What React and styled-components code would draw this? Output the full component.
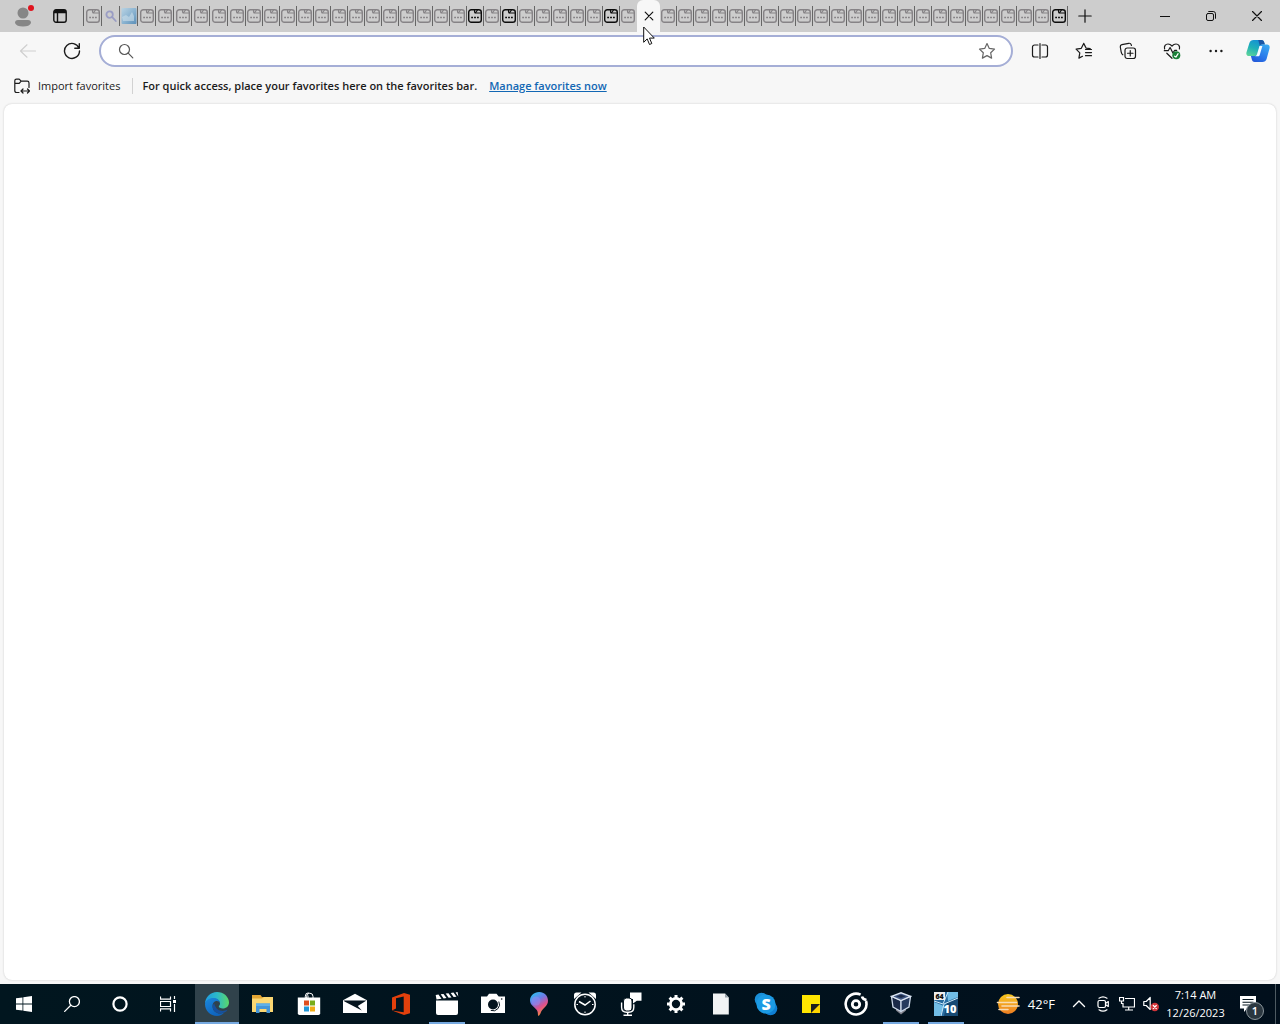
import React, { useState } from 'react';
import styled, { createGlobalStyle } from 'styled-components';

const GlobalStyle = createGlobalStyle`
  * {
    box-sizing: border-box;
  }
  body {
    margin: 0;
    font-family: 'Open Sans', 'Noto Sans', sans-serif;
    font-size: 11px;
    line-height: 16px;
    color: #1b1b1b;
  }
  button {
    border: 0;
    padding: 0;
    background: none;
    color: inherit;
    font: inherit;
  }
  svg {
    display: block;
    flex: none;
  }
`;

const Line = ({ size = 16, children, ...rest }) => (
  <svg
    width={size}
    height={size}
    viewBox={`0 0 ${size} ${size}`}
    fill="none"
    stroke="currentColor"
    strokeWidth="1.2"
    strokeLinecap="round"
    strokeLinejoin="round"
    aria-hidden="true"
    {...rest}
  >
    {children}
  </svg>
);

const Art = ({ size = 24, children }) => (
  <svg width={size} height={size} viewBox={`0 0 ${size} ${size}`} aria-hidden="true">
    {children}
  </svg>
);

/* ---------- tab strip ---------- */

const PageIcon = () => (
  <Line size={14} strokeWidth="1.4">
    <rect x="0.7" y="0.7" width="12.6" height="12.6" rx="2.6" />
    <path d="M6.5 0.9v1.8q0 1.3 1.3 1.3h5.300M7 4.200l2.300-2.800" strokeWidth="1.1" />
    <path d="M3.200 8.500h1.800M6.100 8.500h1.800M9 8.500h1.800" strokeWidth="1.7" strokeLinecap="butt" />
  </Line>
);

const SearchTabIcon = () => (
  <Line size={14} strokeWidth="1.8" stroke="#9a9dc4">
    <circle cx="5.6" cy="5.6" r="3.2" />
    <path d="M8.2 8.2l3.6 3.8" />
  </Line>
);

const PictureTabIcon = () => (
  <Art size={16}>
    <defs>
      <linearGradient id="sky" x1="0" y1="0" x2="1" y2="1">
        <stop offset="0" stopColor="#b9d3e3" />
        <stop offset="0.5" stopColor="#8db5d2" />
        <stop offset="1" stopColor="#5b8fb8" />
      </linearGradient>
    </defs>
    <rect x="0.5" width="15" height="16" rx="1" fill="url(#sky)" />
    <path d="M1 9l4-2 3 2 3-5 2 4v5H2z" fill="#c8dce8" opacity="0.65" />
  </Art>
);

const tabs = Array.from({ length: 57 }, (_, i) => ({
  id: i,
  kind: i === 1 ? 'search' : i === 2 ? 'picture' : 'page',
  awake: [22, 24, 30, 56].includes(i),
  wide: i < 9,
}));

const ACTIVE_TAB = 32;

/* ---------- toolbar icons ---------- */

const CopilotIcon = () => (
  <Art size={24}>
    <defs>
      <linearGradient id="cpA" x1="0.6" y1="0" x2="0.2" y2="1">
        <stop offset="0" stopColor="#1591d4" />
        <stop offset="0.5" stopColor="#1fb0b8" />
        <stop offset="1" stopColor="#5cd39a" />
      </linearGradient>
      <linearGradient id="cpB" x1="0.8" y1="0" x2="0.2" y2="1">
        <stop offset="0" stopColor="#38a8f2" />
        <stop offset="0.6" stopColor="#2a78ea" />
        <stop offset="1" stopColor="#2358d8" />
      </linearGradient>
    </defs>
    <path d="M7.5 1h7.8c1.5 0 2.3.8 2.7 2l.8 2.6h-2.4c-1.4 0-2.2.8-2.6 2L11.4 15c-.5 1.5-1.4 2-2.8 2H3C.8 17-.1 15.3.5 13.2L3.4 4C4 2.1 5.500 1 7.500 1z" fill="url(#cpA)" />
    <path d="M12.200 1h3.200c1.500 0 2.300.8 2.700 2l.8 2.600h-2.500c-1.200 0-2 .6-2.400 1.600z" fill="#1b56a5" />
    <path d="M16.500 23H8.700c-1.500 0-2.300-.8-2.700-2l-1.100-4h3.500c1.700 0 2.500-.8 2.900-2l2.200-7.400c.4-1.300 1.300-2 2.700-2H21c2.200 0 3.100 1.700 2.500 3.800L20.600 20c-.6 1.900-2.100 3-4.100 3z" fill="url(#cpB)" />
    <path d="M13.500 7h2.900l-2.600 8.700c-.3 1-.9 1.600-1.800 1.600H9c1.100-.2 1.800-1.200 2.100-2.200z" fill="#f4fbff" />
  </Art>
);

const toolbarButtons = [
  {
    label: 'Split screen',
    icon: (
      <Line size={18}>
        <path d="M7 3H3.500a2 2 0 0 0-2 2v8a2 2 0 0 0 2 2H7M11 3h3.500a2 2 0 0 1 2 2v8a2 2 0 0 1-2 2H11M9 1.500v15" />
      </Line>
    ),
  },
  {
    label: 'Favorites',
    icon: (
      <Line size={18}>
        <path d="M15.200 6.700l-4-.5L8.700 1.400 6.300 6.300l-5.200.8 3.700 3.700-.9 5.300 3.600-1.800M10.500 7.500h6M10.500 10.600h6M10.500 13.700h6" />
      </Line>
    ),
  },
  {
    label: 'Collections',
    icon: (
      <Line size={18}>
        <rect x="6" y="6" width="10.5" height="10.5" rx="2.2" />
        <path d="M11.250 8.500v5.500M8.500 11.250h5.500M3.800 12.800C2.500 12 2.400 11 2.100 9.500L1.300 5c-.2-1.300.4-2 1.600-2.300L9.700 1.300c1.300-.2 2.200.2 2.600 1.600l.1.600" />
      </Line>
    ),
  },
  {
    label: 'Browser essentials',
    icon: (
      <Line size={18}>
        <path d="M1.600 7C.9 4.200 2.500 2 5 2c1.700 0 3 .9 4 2 1-1.100 2.300-2 4-2 2.500 0 4.100 2.200 3.400 5M1.300 8.700h3.900l1.900-3.200 2.800 5.600 1.800-2.800h2M3.800 11.200L9 16.300" />
        <circle cx="13.300" cy="13.300" r="4" fill="#1a7f37" stroke="none" />
        <path d="M11.600 14.200l1.300.9 2.200-3.400" stroke="#fff" />
      </Line>
    ),
  },
  {
    label: 'Settings and more',
    icon: (
      <Line size={18} stroke="none">
        <g fill="currentColor">
          <circle cx="3.6" cy="9" r="1.2" />
          <circle cx="9" cy="9" r="1.2" />
          <circle cx="14.4" cy="9" r="1.2" />
        </g>
      </Line>
    ),
  },
];

/* ---------- taskbar icons ---------- */

const systemButtons = [
  {
    label: 'Start',
    icon: (
      <Art size={16}>
        <path d="M0 2.300l6.500-.9v6.200H0zM7.300 1.300L16 0v7.600H7.300zM0 8.400h6.500v6.200L0 13.700zM7.300 8.400H16V16l-8.700-1.200z" fill="#fff" />
      </Art>
    ),
  },
  {
    label: 'Search',
    icon: (
      <Line size={16} strokeWidth="1.3">
        <circle cx="10.4" cy="5.6" r="5" />
        <path d="M6.800 9.300L.7 15.400" />
      </Line>
    ),
  },
  {
    label: 'Cortana',
    icon: (
      <Line size={16} strokeWidth="2.2">
        <circle cx="8" cy="8" r="6.6" />
      </Line>
    ),
  },
  {
    label: 'Task View',
    icon: (
      <Line size={16} strokeLinecap="butt" strokeLinejoin="miter">
        <path d="M.5.500v2.700h10V.5M.5 15.500v-2.700h10v2.700M.5 5.500h10v5H.5zM14.500 0v3M14.500 8v8" />
        <rect x="13" y="4" width="3" height="3" fill="currentColor" stroke="none" />
      </Line>
    ),
  },
];

const EdgeIcon = () => (
  <Art size={24}>
    <defs>
      <linearGradient id="edgeTop" x1="0" y1="0.5" x2="1" y2="0.5">
        <stop offset="0" stopColor="#1f9be0" />
        <stop offset="0.5" stopColor="#2cb9c9" />
        <stop offset="1" stopColor="#5bd868" />
      </linearGradient>
      <linearGradient id="edgeLow" x1="0" y1="0" x2="0.6" y2="1">
        <stop offset="0" stopColor="#1b88dc" />
        <stop offset="1" stopColor="#0e62bc" />
      </linearGradient>
    </defs>
    <path d="M0 12C0 5 5.400 0 12 0s12 4.800 12 10.400c0 3.800-2.800 6-6.200 6-2.400 0-4-.9-4-1.900 0-.7 1.200-1.200 1.200-3 0-2.700-2.600-4.700-5.800-4.700C4.600 6.800.8 9.500 0 12z" fill="url(#edgeTop)" />
    <path d="M0 12C.6 8.500 4 6 8.300 6c3.700 0 6.500 2 6.700 5-.5-1.300-1.800-2-3.200-2-2.500 0-4.300 2.200-4.300 5.200 0 4.300 3.500 7.300 7.700 7.300 1.500 0 2.800-.4 4-.9C17.400 22.800 15 24 12 24 5.300 24 0 18.700 0 12z" fill="url(#edgeLow)" />
    <path d="M9.200 11.200c-1.800 1.700-2 4.600-.6 6.900 1.700 3 5.400 4.300 10.600 2.500 1.400-.5 2.700-1.700 3.400-2.800-5 2.200-11.500 1.500-13.400-6.600z" fill="#17509c" />
  </Art>
);

const apps = [
  { label: 'Microsoft Edge', focused: true, icon: <EdgeIcon /> },
  {
    label: 'File Explorer',
    icon: (
      <Art>
        <path d="M1 3h8.500l1.500 2h11v15H1z" fill="#e2a534" />
        <path d="M1 6.500h10L13 5h9v15H1z" fill="#fbd772" />
        <path d="M5 11.500h14V21h-3.500v-4h-7v4H5z" fill="#4596d8" />
        <path d="M5 11.500h14v2.500H5z" fill="#5fb0e8" />
      </Art>
    ),
  },
  {
    label: 'Microsoft Store',
    icon: (
      <Art>
        <path d="M8.300 6V4.200a3.400 3.400 0 0 1 3.400-3.400M9.600 6V4.400a3.200 3.200 0 0 1 6.400 0V6M11 6V3.500" fill="none" stroke="#fff" strokeWidth="1" />
        <path d="M.8 5.500h22.400v15.800q0 1.700-1.700 1.700H2.500Q.8 23 .8 21.300z" fill="#fff" />
        <path d="M7 8.500h5v5H7z" fill="#e04f1f" />
        <path d="M13 8.500h5v5h-5z" fill="#78ac19" />
        <path d="M7 14.500h5v5H7z" fill="#2298d8" />
        <path d="M13 14.500h5v5h-5z" fill="#f0ac17" />
      </Art>
    ),
  },
  {
    label: 'Mail',
    icon: (
      <Art>
        <path d="M12 1.800l12 6.400V21H0V8.200z" fill="#fff" />
        <path d="M.5 8.500h23L14.800 14l4 4.500-17.300-9z" fill="#05141e" />
      </Art>
    ),
  },
  {
    label: 'Office',
    icon: (
      <Art>
        <path d="M3 5.500L15 1l6 1.700v18.500L15 23 3 18.600l11.700 1.600V4.500L7 6.300v10.300l-4 1.900z" fill="#e2400c" />
      </Art>
    ),
  },
  {
    label: 'Movies & TV',
    running: true,
    icon: (
      <Art>
        <path d="M1 8.500h22V21q0 2-2 2H3q-2 0-2-2z" fill="#fff" />
        <path d="M.7 3l2.800-.4 3 4.200-5 .7zM5.700 2.300l2.800-.4 3 4.200-2.900.4zM10.700 1.600l2.800-.4 3 4.200-2.900.4zM15.700.9l2.800-.4 3 4.200-2.900.4zM20.600.4l2-.3.700 4.400z" fill="#fff" />
      </Art>
    ),
  },
  {
    label: 'Camera',
    icon: (
      <Art>
        <path d="M0 4.500h6L8 1.800h7.500l2.200 2.700H24V21H0z" fill="#fff" />
        <circle cx="12" cy="12.5" r="5" fill="#05141e" />
        <path d="M17.800 9.500a6.400 6.400 0 0 1-8 8.900" fill="none" stroke="#05141e" strokeWidth="1" />
        <circle cx="20.7" cy="7" r="0.8" fill="#05141e" />
      </Art>
    ),
  },
  {
    label: 'Paint 3D',
    icon: (
      <Art>
        <defs>
          <linearGradient id="drop" x1="0.2" y1="0" x2="0.7" y2="1">
            <stop offset="0" stopColor="#2bc0f0" />
            <stop offset="0.35" stopColor="#6c7be8" />
            <stop offset="0.65" stopColor="#e0508c" />
            <stop offset="1" stopColor="#f79a2d" />
          </linearGradient>
        </defs>
        <path d="M12.200 0C17.400 0 21 3.800 21 8.700c0 5.600-5.500 7.600-7 11.300-.5 1.400-1.300 3.500-2.500 4-.9-.8-.4-3-1-4.600C9.300 16 3 13.800 3 8.600 3 3.800 7 0 12.200 0z" fill="url(#drop)" />
        <circle cx="9" cy="9" r="4.5" fill="#a08cf0" opacity="0.45" />
      </Art>
    ),
  },
  {
    label: 'Alarms & Clock',
    icon: (
      <Art>
        <path d="M1 7V3q0-2.500 2.500-2.500h5zM23 7V3q0-2.500-2.500-2.500h-5z" fill="#fff" />
        <circle cx="12" cy="12.5" r="10.2" fill="#05141e" stroke="#fff" strokeWidth="1.5" />
        <path d="M6 9.500l6 3.500 5.500-4" fill="none" stroke="#fff" strokeWidth="1.5" />
        <path d="M12 4v1.500M12 19.500V21M3.500 12.500H5M19 12.500h1.500" stroke="#fff" strokeWidth="1" />
      </Art>
    ),
  },
  {
    label: 'Voice Recorder',
    compact: true,
    icon: (
      <Art>
        <path d="M11 .5h11.500v8.300h-4.700L14 11.500V7h-3z" fill="#fff" />
        <rect x="4.5" y="6" width="8.5" height="13" rx="3" fill="#fff" stroke="#05141e" />
        <path d="M2.600 10.500v4.800q0 5 5 5h2.200q5 0 5-5v-3M8.700 20.500v3M4.500 23.300h8.500" fill="none" stroke="#fff" strokeWidth="1.4" />
      </Art>
    ),
  },
  {
    label: 'Settings',
    compact: true,
    icon: (
      <Art>
        <circle cx="12" cy="12" r="5.6" fill="none" stroke="#fff" strokeWidth="2.8" />
        <path d="M12 3v3.500M12 17.500V21M3 12h3.500M17.500 12H21M5.600 5.600l2.600 2.600M15.800 15.800l2.600 2.600M18.400 5.600l-2.600 2.600M8.200 15.800l-2.600 2.600" stroke="#fff" strokeWidth="3" />
      </Art>
    ),
  },
  {
    label: 'Document',
    compact: true,
    icon: (
      <Art>
        <path d="M4 1.500h12l3.800 4V22.500H4z" fill="#f1f3f4" />
        <path d="M16 1.500l3.800 4H16z" fill="#98a3aa" />
      </Art>
    ),
  },
  {
    label: 'Skype',
    compact: true,
    icon: (
      <Art>
        <circle cx="7.5" cy="7.5" r="6.8" fill="#1a8fd8" />
        <circle cx="16.5" cy="16.5" r="6.8" fill="#0f7fd4" />
        <circle cx="12" cy="12" r="9.6" fill="#1b9ae4" />
        <text x="12" y="18" textAnchor="middle" fill="#fff" fontSize="16" fontWeight="800">
          S
        </text>
      </Art>
    ),
  },
  {
    label: 'Sticky Notes',
    compact: true,
    icon: (
      <Art>
        <path d="M3 3h18v9h-9v9H3z" fill="#ffe500" />
        <path d="M12 12h9l-9 9z" fill="#1e1e1e" />
        <path d="M21 12v9h-9z" fill="#ffd500" />
      </Art>
    ),
  },
  {
    label: 'Groove Music',
    compact: true,
    icon: (
      <Art>
        <path d="M16.600 2.700A10.400 10.400 0 1 0 22 9" fill="none" stroke="#fff" strokeWidth="2.600" />
        <circle cx="12" cy="12.3" r="3.7" fill="none" stroke="#fff" strokeWidth="2.800" />
        <path d="M18 4.500q.5 2.700 4.500 3.500" fill="none" stroke="#fff" strokeWidth="2.600" />
      </Art>
    ),
  },
  {
    label: 'VirtualBox',
    running: true,
    compact: true,
    icon: (
      <Art>
        <path d="M12 22.500l-5-4v-2h10v2z" fill="#85858f" />
        <path d="M2.500 4.500L12 8.500v11l-8-4.500z" fill="#1a2947" stroke="#ccd8e8" strokeWidth="1.300" />
        <path d="M21.500 4.500L12 8.500v11l8-4.500z" fill="#263a5e" stroke="#ccd8e8" strokeWidth="1.300" />
        <path d="M2.500 4.300L12 .8l9.500 3.500L12 8.500z" fill="#3d5581" stroke="#dbe5f2" strokeWidth="1.300" />
        <path d="M7.500 4.300L12 2.800l4.500 1.500L12 6z" fill="#1a2947" />
      </Art>
    ),
  },
  {
    label: 'Virtual machine',
    running: true,
    compact: true,
    icon: (
      <Art>
        <path d="M0 0h24v24H0z" fill="#286ca0" />
        <path d="M0 10l10 4-4 10H0zM13 0h11v5L14 9z" fill="#71bde6" />
        <path d="M13 10l11-4v18H10z" fill="#174a74" />
        <path d="M14 0L9 12l-9-3M10 12l14-6M10 12L7 24" fill="none" stroke="#cce8f8" />
        <path d="M0 0h11v8H0z" fill="#eee" />
        <text x="5.5" y="7" textAnchor="middle" fontSize="7" fontWeight="800" fill="#111">
          64
        </text>
        <text x="16" y="21" textAnchor="middle" fontSize="11" fontWeight="800" fill="#fff">
          10
        </text>
      </Art>
    ),
  },
];

const trayButtons = [
  {
    label: 'Show hidden icons',
    icon: (
      <Line size={16} strokeWidth="1.4">
        <path d="M2.500 10.500L8 5l5.500 5.500" />
      </Line>
    ),
  },
  {
    label: 'Meet Now',
    icon: (
      <Line size={16}>
        <rect x="3" y="4.500" width="7.500" height="7" rx="1.500" />
        <path d="M10.700 7.200l2.600-1.600v4.800l-2.600-1.600M4 2.200q4-2.800 8 0M4 13.800q4 2.800 8 0" />
      </Line>
    ),
  },
  {
    label: 'Network',
    icon: (
      <Line size={16} strokeLinecap="butt" strokeLinejoin="miter">
        <path d="M6 2.500h9.500v8.500H4V7M9.700 11v3M6 14h8M.5 1.500h4v3.500h-4zM2.500 5v2.500H4" />
      </Line>
    ),
  },
  {
    label: 'Volume muted',
    icon: (
      <Line size={16}>
        <path d="M.8 5.500h2.400l4-4v12l-4-4H.8z" />
        <circle cx="11.8" cy="11" r="4.200" fill="#d13438" stroke="none" />
        <path d="M10.300 9.500l3 3M13.300 9.500l-3 3" stroke="#fff" />
      </Line>
    ),
  },
];

const App = () => {
  const [address, setAddress] = useState('');

  return (
    <Window>
      <GlobalStyle />
      <TitleBar>
        <ProfileButton aria-label="Profile">
          <svg width="18" height="22" viewBox="0 0 18 22" aria-hidden="true">
            <circle cx="9" cy="8" r="5.5" fill="#868686" />
            <path d="M1 18q0-3 3-3h10q3 0 3 3-1.500 3.500-8 3.500T1 18z" fill="#868686" />
          </svg>
          <AlertDot />
        </ProfileButton>
        <TitleButton aria-label="Tab actions">
          <Line size={14} strokeWidth="1.4">
            <rect x="0.8" y="0.8" width="12.400" height="12.400" rx="2.200" />
            <path d="M4.500 4v9" />
            <path d="M1 2.500q0-1.500 1.500-1.500h9Q13 1 13 2.500v1.800H1z" fill="currentColor" stroke="none" />
          </Line>
        </TitleButton>
        <TabList>
          {tabs.map(({ id, kind, awake, wide }) =>
            id === ACTIVE_TAB ? (
              <ActiveTab key={id} aria-label="Close tab">
                <Line size={10}>
                  <path d="M1.200 1.200l7.600 7.600M8.800 1.200L1.200 8.800" />
                </Line>
              </ActiveTab>
            ) : (
              <Tab key={id} $awake={awake} $wide={wide} $divided={id !== ACTIVE_TAB - 1} aria-label={`Tab ${id + 1}`}>
                {kind === 'search' && <SearchTabIcon />}
                {kind === 'picture' && <PictureTabIcon />}
                {kind === 'page' && <PageIcon />}
              </Tab>
            )
          )}
        </TabList>
        <NewTabButton aria-label="New tab">
          <Line size={14}>
            <path d="M7 .8v12.400M.8 7h12.400" />
          </Line>
        </NewTabButton>
        <WindowControls>
          <ControlButton aria-label="Minimize">
            <Line size={10} strokeWidth="1" strokeLinecap="butt">
              <path d="M0 5.500h10" />
            </Line>
          </ControlButton>
          <ControlButton aria-label="Restore">
            <Line size={10} strokeWidth="1">
              <rect x="0.5" y="2.5" width="7" height="7" rx="1.5" />
              <path d="M2.700.5h4.500q2.300 0 2.300 2.300v4.500" />
            </Line>
          </ControlButton>
          <ControlButton aria-label="Close">
            <Line size={10}>
              <path d="M.5.500l9 9M9.500.500l-9 9" />
            </Line>
          </ControlButton>
        </WindowControls>
      </TitleBar>

      <Toolbar>
        <ToolButton aria-label="Back" disabled>
          <Line size={18}>
            <path d="M16.500 9H1.500M8 2.800L1.500 9 8 15.200" />
          </Line>
        </ToolButton>
        <ToolButton aria-label="Refresh">
          <Line size={18} strokeWidth="1.4">
            <path d="M16 6.200A7.500 7.500 0 1 0 16.500 9M16.300 1.800v4.500h-4.500" />
          </Line>
        </ToolButton>
        <AddressBar>
          <Line size={16} stroke="#555">
            <circle cx="6.5" cy="6.5" r="5" />
            <path d="M10.200 10.200l4.600 4.600" />
          </Line>
          <AddressInput
            aria-label="Search or enter web address"
            value={address}
            onChange={(e) => setAddress(e.target.value)}
          />
          <StarButton aria-label="Add to favorites">
            <Line size={18}>
              <path d="M9 1.500l2.300 4.900 5.200.7-3.800 3.700.9 5.300L9 13.600l-4.600 2.500.9-5.300L1.500 7.100l5.200-.7z" />
            </Line>
          </StarButton>
        </AddressBar>
        <ToolGroup>
          {toolbarButtons.map(({ label, icon }) => (
            <ToolButton key={label} aria-label={label}>
              {icon}
            </ToolButton>
          ))}
        </ToolGroup>
        <CopilotButton aria-label="Copilot">
          <CopilotIcon />
        </CopilotButton>
      </Toolbar>

      <FavoritesBar>
        <ImportButton>
          <Line size={16}>
            <path d="M5 14.500H2.500Q.8 14.500.8 12.800V2.800Q.8 1.100 2.500 1.100h2.700l2 2h6q1.800 0 1.800 1.800v4.500M.8 5.300h4.400l2-2.200M7 13h8.500M9 11l-2 2 2 2M13.500 11l2 2-2 2" />
          </Line>
          Import favorites
        </ImportButton>
        <Hint>For quick access, place your favorites here on the favorites bar.</Hint>
        <ManageLink href="#favorites">Manage favorites now</ManageLink>
      </FavoritesBar>

      <Page />

      <Taskbar>
        <SystemGroup>
          {systemButtons.map(({ label, icon }) => (
            <SystemButton key={label} aria-label={label}>
              {icon}
            </SystemButton>
          ))}
        </SystemGroup>
        <AppGroup>
          {apps.map(({ label, icon, focused, running, compact }) => (
            <AppButton key={label} aria-label={label} $focused={focused} $running={running} $compact={compact}>
              {icon}
            </AppButton>
          ))}
        </AppGroup>
        <Tray>
          <Weather>
            <Art>
              <defs>
                <linearGradient id="sun" x1="0" y1="0" x2="0" y2="1">
                  <stop offset="0" stopColor="#f7c81e" />
                  <stop offset="1" stopColor="#ee7d22" />
                </linearGradient>
              </defs>
              <circle cx="12" cy="12" r="10" fill="url(#sun)" />
              <path d="M11 5.500h12M1.500 10.500h19M6 14h17M3 17.500h9" stroke="#f8dcb4" strokeWidth="1.6" strokeLinecap="round" />
            </Art>
            42°F
          </Weather>
          {trayButtons.map(({ label, icon }) => (
            <TrayButton key={label} aria-label={label}>
              {icon}
            </TrayButton>
          ))}
          <Clock>
            <span>7:14 AM</span>
            <span>12/26/2023</span>
          </Clock>
          <NotificationButton aria-label="Notifications">
            <Art size={16}>
              <path d="M0 0h16v12.500H7L4 16v-3.500H0z" fill="#fff" />
              <path d="M2.500 3.500h11M2.500 6.300h11M2.500 9h7" stroke="#05141e" strokeWidth="1.1" />
            </Art>
            <Count>1</Count>
          </NotificationButton>
          <ShowDesktop aria-label="Show desktop" />
        </Tray>
      </Taskbar>

      <Pointer width="12" height="20" viewBox="0 0 12 20" aria-hidden="true">
        <path d="M.7 1v15.300l3.500-3.400 2.300 5.600 2.300-1-2.300-5.400h4.800z" fill="#fff" stroke="#111" />
      </Pointer>
    </Window>
  );
};

const Window = styled.div`
  position: relative;
  display: flex;
  flex-direction: column;
  min-height: 100vh;
  background: #f7f7f7;
`;

const TitleBar = styled.header`
  display: flex;
  height: 32px;
  background: #cdcdcd;
`;

const TitleButton = styled.button`
  display: flex;
  align-items: center;
  justify-content: center;
  width: 30px;
  color: #111;
`;

const ProfileButton = styled(TitleButton)`
  position: relative;
  width: 45px;
`;

const AlertDot = styled.span`
  position: absolute;
  top: 5px;
  right: 11px;
  width: 6px;
  height: 6px;
  border-radius: 50%;
  background: #e0141e;
`;

const TabList = styled.nav`
  display: flex;
  margin-left: 8px;

  &::before {
    content: '';
    align-self: center;
    width: 1px;
    height: 20px;
    background: #666;
  }
`;

const Tab = styled.button`
  display: flex;
  align-items: center;
  justify-content: center;
  width: ${({ $wide }) => ($wide ? '18px' : '17px')};
  height: 20px;
  margin-top: 6px;
  border-right: 1px solid ${({ $divided }) => ($divided ? '#666' : 'transparent')};
  color: ${({ $awake }) => ($awake ? '#0c0c0c' : '#868386')};
`;

const ActiveTab = styled.button`
  display: flex;
  align-items: center;
  justify-content: center;
  width: 23px;
  border-radius: 6px 6px 0 0;
  background: #f7f7f7;
  color: #111;
`;

const NewTabButton = styled(TitleButton)`
  margin-left: 2px;
`;

const WindowControls = styled.div`
  display: flex;
  margin-left: auto;
`;

const ControlButton = styled(TitleButton)`
  width: 46px;
`;

const Toolbar = styled.div`
  display: flex;
  align-items: center;
  height: 38px;
  padding: 0 2px 0 6px;
`;

const ToolButton = styled.button`
  display: flex;
  align-items: center;
  justify-content: center;
  width: 44px;
  height: 32px;
  color: #1b1b1b;

  &:disabled {
    color: #cfcfcf;
  }
`;

const ToolGroup = styled.div`
  display: flex;
`;

const CopilotButton = styled(ToolButton)`
  width: 40px;
`;

const AddressBar = styled.div`
  display: flex;
  align-items: center;
  flex: 1;
  height: 32px;
  margin: 0 5px;
  padding: 0 15px 0 17px;
  border: 2px solid #a5aed6;
  border-radius: 16px;
  background: #fff;
`;

const AddressInput = styled.input`
  flex: 1;
  min-width: 0;
  margin: 0 12px;
  border: 0;
  outline: 0;
  background: transparent;
  font: inherit;
  font-size: 14px;
`;

const StarButton = styled.button`
  color: #666;
`;

const FavoritesBar = styled.div`
  display: flex;
  align-items: center;
  height: 32px;
  padding: 0 14px;
`;

const ImportButton = styled.button`
  display: flex;
  align-items: center;
  gap: 8px;
  padding-right: 12px;
  border-right: 1px solid #d2d2d2;
`;

const Hint = styled.span`
  padding: 0 12px 0 9px;
  font-weight: 600;
`;

const ManageLink = styled.a`
  color: #1267b4;
  font-weight: 600;
`;

const Page = styled.main`
  flex: 1;
  margin: 2px 4px 4px;
  border-radius: 8px;
  background: #fff;
  box-shadow: 0 0 2px #c4c4c4;
`;

const Taskbar = styled.footer`
  display: flex;
  height: 40px;
  background: linear-gradient(90deg, #01161f, #010f1c);
  color: #fff;
`;

const SystemGroup = styled.div`
  display: flex;
`;

const SystemButton = styled.button`
  display: flex;
  align-items: center;
  justify-content: center;
  width: 48px;
`;

const AppGroup = styled.div`
  display: flex;
  margin-left: 2px;
`;

const AppButton = styled.button`
  display: flex;
  align-items: center;
  justify-content: center;
  width: ${({ $compact }) => ($compact ? '45px' : '46px')};
  border: solid transparent;
  border-width: 0 1px;
  background-color: ${({ $focused }) => ($focused ? '#30424b' : 'transparent')};
  background-image: ${({ $focused, $running }) =>
    $focused || $running ? 'linear-gradient(#76a9e0, #76a9e0)' : 'none'};
  background-position: center bottom;
  background-size: ${({ $focused }) => ($focused ? '100%' : '36px')} 2px;
  background-repeat: no-repeat;
  background-clip: padding-box;
`;

const Tray = styled.div`
  display: flex;
  align-items: center;
  margin-left: auto;
`;

const Weather = styled.div`
  display: flex;
  align-items: center;
  gap: 8px;
  margin-right: 12px;
  font-size: 13px;
`;

const TrayButton = styled.button`
  display: flex;
  align-items: center;
  justify-content: center;
  width: 24px;
  height: 40px;
`;

const Clock = styled.div`
  display: flex;
  flex-direction: column;
  align-items: center;
  width: 65px;
  line-height: 18px;
`;

const NotificationButton = styled.button`
  position: relative;
  display: flex;
  align-items: center;
  justify-content: center;
  width: 40px;
  height: 40px;
`;

const Count = styled.span`
  position: absolute;
  right: 4px;
  bottom: 4px;
  width: 18px;
  height: 18px;
  border: 1px solid #8c969c;
  border-radius: 50%;
  background: #2b3740;
  font-size: 11px;
  font-weight: 600;
  line-height: 16px;
`;

const ShowDesktop = styled.button`
  align-self: stretch;
  width: 5px;
  margin-left: 7px;
  border-left: 1px solid #4d5a62;
`;

const Pointer = styled.svg`
  position: absolute;
  top: 26px;
  left: 643px;
`;

export default App;
